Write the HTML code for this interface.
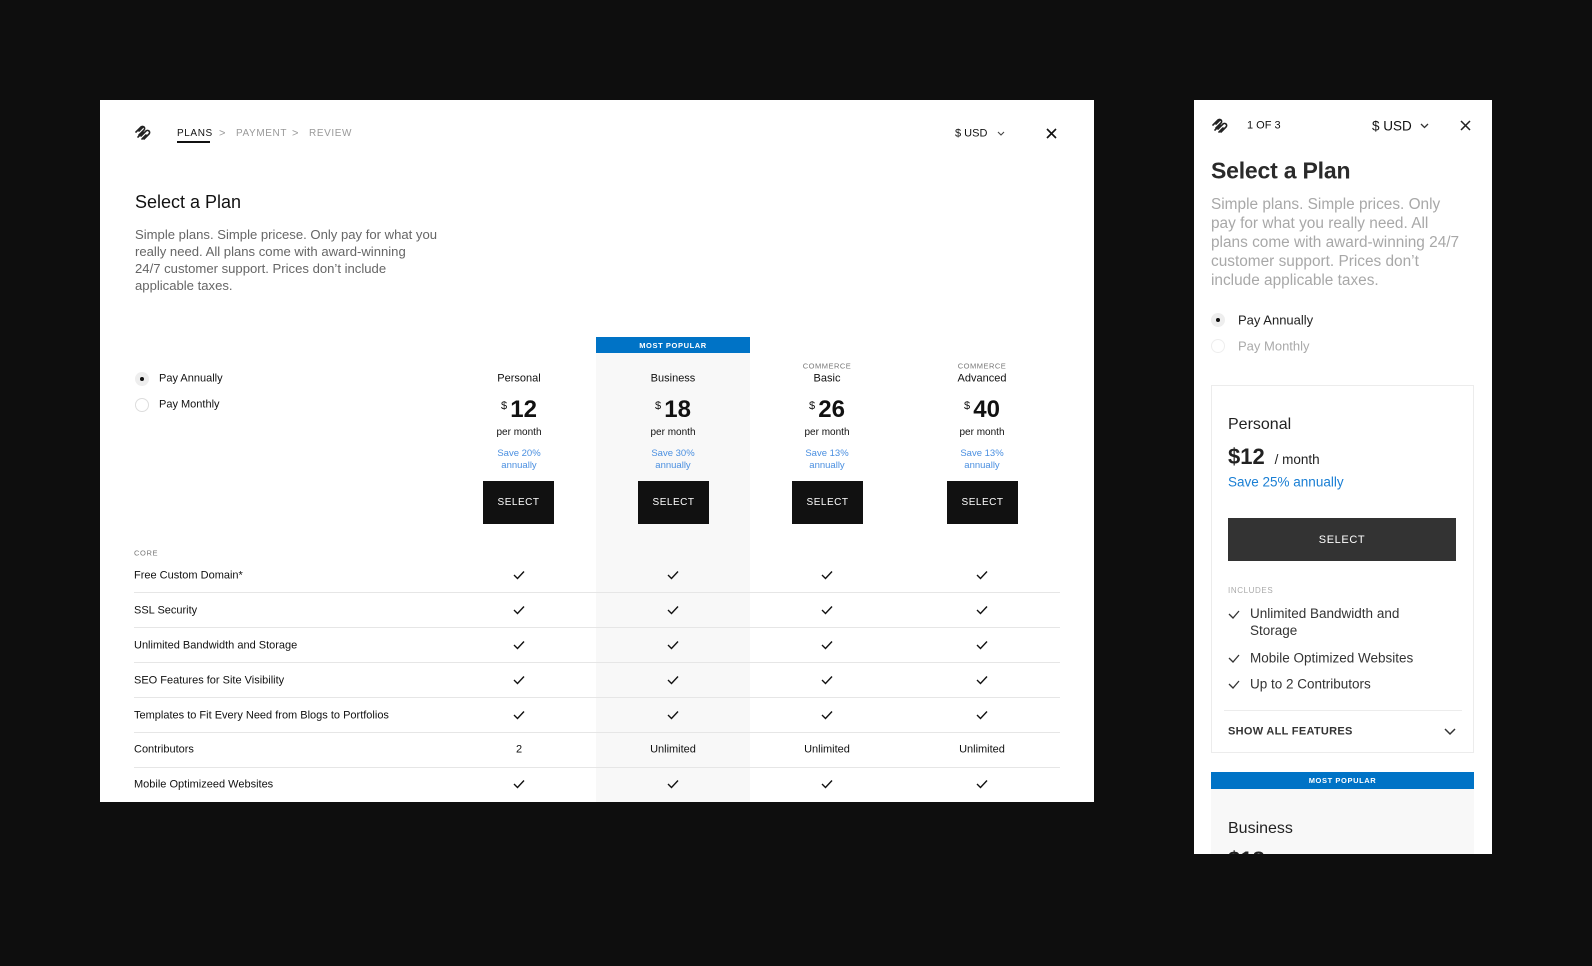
<!DOCTYPE html>
<html><head><meta charset="utf-8"><style>
*{margin:0;padding:0;box-sizing:border-box}
body{width:1592px;height:966px;background:#0e0e0e;font-family:"Liberation Sans",sans-serif;color:#111;position:relative;overflow:hidden}
.p{position:absolute;background:#fff;overflow:hidden}
.t{position:absolute;white-space:nowrap;transform:translateY(-50%);line-height:1}
.c{width:150px;text-align:center}
.sep{position:absolute;left:34px;width:926px;height:1px;background:#e6e6e6}
.btn{position:absolute;width:71px;height:43px;background:#111;color:#fff;font-size:10px;letter-spacing:.5px;display:flex;align-items:center;justify-content:center}
</style></head><body>

<div class="p" style="left:100px;top:100px;width:994px;height:702px">
<svg style="position:absolute;left:34px;top:25px" width="17" height="16" viewBox="0 0 17 16" fill="none" stroke="#222" stroke-width="1.6" stroke-linecap="round"><path d="M2 7 L7 2 A2 2 0 0 1 10 5 L5 10"/><path d="M5 6 L9 2"/><path d="M7 11 L12 6 A2 2 0 0 1 15 9 L10 14"/><path d="M12 10 L8 14"/><path d="M4 12 L9 7"/></svg>
<div class="t" style="left:77px;top:34px;font-size:10px;letter-spacing:.6px;color:#111">PLANS</div>
<div style="position:absolute;left:77px;top:41px;width:33px;height:1.5px;background:#111"></div>
<div class="t" style="left:119px;top:34px;font-size:11px;color:#999">&gt;</div>
<div class="t" style="left:136px;top:34px;font-size:10px;letter-spacing:.6px;color:#999">PAYMENT</div>
<div class="t" style="left:192px;top:34px;font-size:11px;color:#999">&gt;</div>
<div class="t" style="left:209px;top:34px;font-size:10px;letter-spacing:.6px;color:#999">REVIEW</div>
<div class="t" style="left:855px;top:34px;font-size:11px">$ USD</div>
<svg style="position:absolute;left:897px;top:31px" width="8" height="6" viewBox="0 0 8 6" fill="none" stroke="#444" stroke-width="1.1"><path d="M1 1 L4 4 L7 1"/></svg>
<svg style="position:absolute;left:946px;top:28px" width="11" height="11" viewBox="0 0 11 11" stroke="#111" stroke-width="1.6"><path d="M1 1 L10 10 M10 1 L1 10"/></svg>

<div class="t" style="left:35px;top:102px;font-size:18px">Select a Plan</div>
<div style="position:absolute;left:35px;top:126px;white-space:nowrap;font-size:13.1px;line-height:17px;color:#666">Simple plans. Simple pricese. Only pay for what you<br>really need. All plans come with award-winning<br>24/7 customer support. Prices don’t include<br>applicable taxes.</div>

<div style="position:absolute;left:35px;top:272px;width:14px;height:14px;border-radius:50%;background:#eee"></div>
<div style="position:absolute;left:40px;top:277px;width:4px;height:4px;border-radius:50%;background:#111"></div>
<div class="t" style="left:59px;top:279px;font-size:11px">Pay Annually</div>
<div style="position:absolute;left:35px;top:298px;width:14px;height:14px;border-radius:50%;border:1px solid #ddd"></div>
<div class="t" style="left:59px;top:305px;font-size:11px">Pay Monthly</div>

<div style="position:absolute;left:496px;top:237px;width:154px;height:470px;background:#f8f8f8"></div>
<div style="position:absolute;left:496px;top:237px;width:154px;height:16px;background:#0073c6;color:#fff;font-size:7.5px;letter-spacing:.6px;display:flex;align-items:center;justify-content:center;font-weight:bold">MOST POPULAR</div>

<div class="t c" style="left:344px;top:279px;font-size:11px">Personal</div>
<div class="t c" style="left:498px;top:279px;font-size:11px">Business</div>
<div class="t c" style="left:652px;top:266px;font-size:7.5px;letter-spacing:.5px;color:#777">COMMERCE</div>
<div class="t c" style="left:652px;top:279px;font-size:11px">Basic</div>
<div class="t c" style="left:807px;top:266px;font-size:7.5px;letter-spacing:.5px;color:#777">COMMERCE</div>
<div class="t c" style="left:807px;top:279px;font-size:11px">Advanced</div>

<div class="t c" style="left:344px;top:310px;font-size:24px;font-weight:bold"><span style="font-size:11px;font-weight:normal;vertical-align:8px">$ </span>12</div>
<div class="t c" style="left:498px;top:310px;font-size:24px;font-weight:bold"><span style="font-size:11px;font-weight:normal;vertical-align:8px">$ </span>18</div>
<div class="t c" style="left:652px;top:310px;font-size:24px;font-weight:bold"><span style="font-size:11px;font-weight:normal;vertical-align:8px">$ </span>26</div>
<div class="t c" style="left:807px;top:310px;font-size:24px;font-weight:bold"><span style="font-size:11px;font-weight:normal;vertical-align:8px">$ </span>40</div>

<div class="t c" style="left:344px;top:333px;font-size:10px">per month</div>
<div class="t c" style="left:498px;top:333px;font-size:10px">per month</div>
<div class="t c" style="left:652px;top:333px;font-size:10px">per month</div>
<div class="t c" style="left:807px;top:333px;font-size:10px">per month</div>

<div class="c" style="position:absolute;left:344px;top:348px;font-size:9.5px;line-height:12px;color:#4a8fe0">Save 20%<br>annually</div>
<div class="c" style="position:absolute;left:498px;top:348px;font-size:9.5px;line-height:12px;color:#4a8fe0">Save 30%<br>annually</div>
<div class="c" style="position:absolute;left:652px;top:348px;font-size:9.5px;line-height:12px;color:#4a8fe0">Save 13%<br>annually</div>
<div class="c" style="position:absolute;left:807px;top:348px;font-size:9.5px;line-height:12px;color:#4a8fe0">Save 13%<br>annually</div>

<div class="btn" style="left:383px;top:381px">SELECT</div>
<div class="btn" style="left:538px;top:381px">SELECT</div>
<div class="btn" style="left:692px;top:381px">SELECT</div>
<div class="btn" style="left:847px;top:381px">SELECT</div>

<div class="t" style="left:34px;top:453px;font-size:7.5px;letter-spacing:.6px;color:#777">CORE</div>

<div class="sep" style="top:492px"></div><div class="sep" style="top:527px"></div><div class="sep" style="top:562px"></div><div class="sep" style="top:597px"></div><div class="sep" style="top:632px"></div><div class="sep" style="top:667px"></div>

<div class="t" style="left:34px;top:476px;font-size:11px">Free Custom Domain*</div>
<div class="t" style="left:34px;top:511px;font-size:11px">SSL Security</div>
<div class="t" style="left:34px;top:546px;font-size:11px">Unlimited Bandwidth and Storage</div>
<div class="t" style="left:34px;top:581px;font-size:11px">SEO Features for Site Visibility</div>
<div class="t" style="left:34px;top:616px;font-size:11px">Templates to Fit Every Need from Blogs to Portfolios</div>
<div class="t" style="left:34px;top:650px;font-size:11px">Contributors</div>
<div class="t" style="left:34px;top:685px;font-size:11px">Mobile Optimizeed Websites</div>

<div class="t c" style="left:344px;top:650px;font-size:11px">2</div>
<div class="t c" style="left:498px;top:650px;font-size:11px">Unlimited</div>
<div class="t c" style="left:652px;top:650px;font-size:11px">Unlimited</div>
<div class="t c" style="left:807px;top:650px;font-size:11px">Unlimited</div>

<svg style="position:absolute;left:0;top:0" width="994" height="702" fill="none" stroke="#111" stroke-width="1.4">
<defs><path id="k" d="M-5 0 L-1.5 3.5 L5 -3.5"/></defs>
<g>
<use href="#k" x="419" y="475"/><use href="#k" x="573" y="475"/><use href="#k" x="727" y="475"/><use href="#k" x="882" y="475"/>
<use href="#k" x="419" y="510"/><use href="#k" x="573" y="510"/><use href="#k" x="727" y="510"/><use href="#k" x="882" y="510"/>
<use href="#k" x="419" y="545"/><use href="#k" x="573" y="545"/><use href="#k" x="727" y="545"/><use href="#k" x="882" y="545"/>
<use href="#k" x="419" y="580"/><use href="#k" x="573" y="580"/><use href="#k" x="727" y="580"/><use href="#k" x="882" y="580"/>
<use href="#k" x="419" y="615"/><use href="#k" x="573" y="615"/><use href="#k" x="727" y="615"/><use href="#k" x="882" y="615"/>
<use href="#k" x="419" y="684"/><use href="#k" x="573" y="684"/><use href="#k" x="727" y="684"/><use href="#k" x="882" y="684"/>
</g></svg>
</div>

<div class="p" style="left:1194px;top:100px;width:298px;height:754px">
<svg style="position:absolute;left:17px;top:18px" width="17" height="16" viewBox="0 0 17 16" fill="none" stroke="#222" stroke-width="1.6" stroke-linecap="round"><path d="M2 7 L7 2 A2 2 0 0 1 10 5 L5 10"/><path d="M5 6 L9 2"/><path d="M7 11 L12 6 A2 2 0 0 1 15 9 L10 14"/><path d="M12 10 L8 14"/><path d="M4 12 L9 7"/></svg>
<div class="t" style="left:53px;top:26px;font-size:11px">1 OF 3</div>
<div class="t" style="left:178px;top:26px;font-size:13.5px">$ USD</div>
<svg style="position:absolute;left:226px;top:23px" width="9" height="6" viewBox="0 0 9 6" fill="none" stroke="#333" stroke-width="1.3"><path d="M1 1 L4.5 4.5 L8 1"/></svg>
<svg style="position:absolute;left:266px;top:20px" width="11" height="11" viewBox="0 0 11 11" stroke="#222" stroke-width="1.5"><path d="M1 1 L10 10 M10 1 L1 10"/></svg>
<div class="t" style="left:17px;top:71px;font-size:23px;color:#2a2a2a;font-weight:bold;letter-spacing:-.2px">Select a Plan</div>
<div style="position:absolute;left:17px;top:95px;white-space:nowrap;font-size:15.4px;line-height:19px;color:#a8a8a8">Simple plans. Simple prices. Only<br>pay for what you really need. All<br>plans come with award-winning 24/7<br>customer support. Prices don’t<br>include applicable taxes.</div>
<div style="position:absolute;left:17px;top:213px;width:14px;height:14px;border-radius:50%;background:#eee"></div>
<div style="position:absolute;left:22px;top:218px;width:4px;height:4px;border-radius:50%;background:#111"></div>
<div class="t" style="left:44px;top:220px;font-size:13px;color:#222">Pay Annually</div>
<div style="position:absolute;left:17px;top:239px;width:14px;height:14px;border-radius:50%;border:1px solid #eee"></div>
<div class="t" style="left:44px;top:246px;font-size:13px;color:#aaa">Pay Monthly</div>

<div style="position:absolute;left:17px;top:285px;width:263px;height:368px;border:1px solid #ececec"></div>
<div class="t" style="left:34px;top:325px;font-size:16px;color:#222">Personal</div>
<div class="t" style="left:34px;top:357px;font-size:22px;font-weight:bold;color:#222">$12 <span style="font-size:13.5px;font-weight:normal">&nbsp;/ month</span></div>
<div class="t" style="left:34px;top:382px;font-size:13.5px;color:#1a7fd4">Save 25% annually</div>
<div style="position:absolute;left:34px;top:418px;width:228px;height:43px;background:#333;color:#fff;font-size:11px;letter-spacing:.6px;display:flex;align-items:center;justify-content:center">SELECT</div>
<div class="t" style="left:34px;top:491px;font-size:8px;letter-spacing:.6px;color:#aaa">INCLUDES</div>
<svg style="position:absolute;left:0;top:0" width="298" height="754" fill="none" stroke="#333" stroke-width="1.3"><path d="M35 514 L39 518 L45 511"/><path d="M35 558 L39 562 L45 555"/><path d="M35 584 L39 588 L45 581"/><path d="M251 629 L256 634 L261 629" stroke-width="1.5"/></svg>
<div style="position:absolute;left:56px;top:505px;width:170px;font-size:13.5px;line-height:17px;color:#333">Unlimited Bandwidth and Storage</div>
<div class="t" style="left:56px;top:558px;font-size:13.5px;color:#333">Mobile Optimized Websites</div>
<div class="t" style="left:56px;top:584px;font-size:13.5px;color:#333">Up to 2 Contributors</div>
<div style="position:absolute;left:30px;top:610px;width:238px;height:1px;background:#ececec"></div>
<div class="t" style="left:34px;top:632px;font-size:11px;letter-spacing:.3px;font-weight:bold;color:#333">SHOW ALL FEATURES</div>

<div style="position:absolute;left:17px;top:672px;width:263px;height:17px;background:#0073c6;color:#fff;font-size:7.5px;letter-spacing:.6px;font-weight:bold;display:flex;align-items:center;justify-content:center">MOST POPULAR</div>
<div style="position:absolute;left:17px;top:689px;width:263px;height:80px;background:#f8f8f8"></div>
<div class="t" style="left:34px;top:729px;font-size:16px;color:#222">Business</div>
<div class="t" style="left:34px;top:760px;font-size:22px;font-weight:bold;color:#222">$18</div>
</div>
</body></html>
